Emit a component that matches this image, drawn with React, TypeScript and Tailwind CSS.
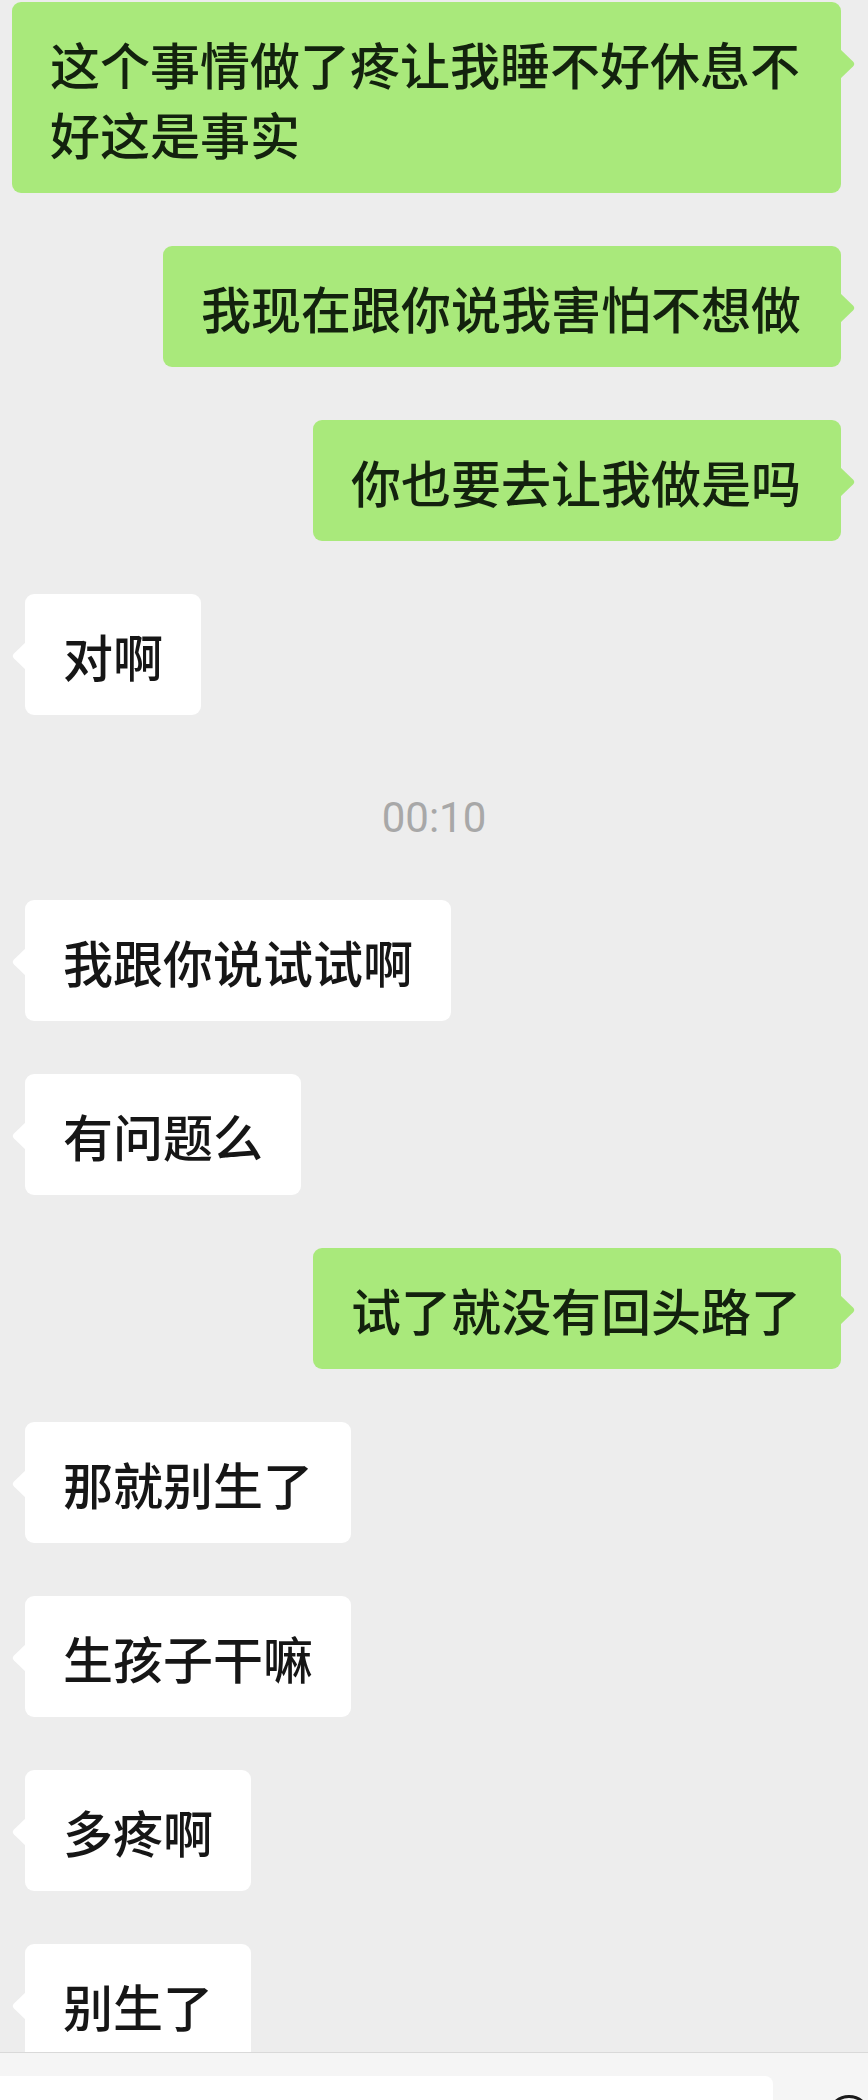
type Msg =
  | { kind: "me"; text: string }
  | { kind: "them"; text: string }
  | { kind: "time"; text: string };

const messages: Msg[] = [
  { kind: "me", text: "这个事情做了疼让我睡不好休息不好这是事实" },
  { kind: "me", text: "我现在跟你说我害怕不想做" },
  { kind: "me", text: "你也要去让我做是吗" },
  { kind: "them", text: "对啊" },
  { kind: "time", text: "00:10" },
  { kind: "them", text: "我跟你说试试啊" },
  { kind: "them", text: "有问题么" },
  { kind: "me", text: "试了就没有回头路了" },
  { kind: "them", text: "那就别生了" },
  { kind: "them", text: "生孩子干嘛" },
  { kind: "them", text: "多疼啊" },
  { kind: "them", text: "别生了" },
];

const cjk = "font-['Noto_Sans_CJK_SC','Noto_Sans',sans-serif] font-medium";

const MyBubble = ({ text }: { text: string }) => (
  <div className="flex justify-end pr-[27px]">
    <div
      className={`relative max-w-[829px] rounded-[9px] bg-[#a9e97b] pl-[38px] pr-[40px] py-[25.5px] text-[50px] leading-[70px] text-[#13220e] ${cjk}`}
    >
      {text}
      {/* tail */}
      <svg
        className="absolute right-[-15px] top-[47px]"
        width="16"
        height="30"
        viewBox="0 0 16 30"
      >
        <path d="M0 0 L13 12.5 Q15.5 15 13 17.5 L0 30 Z" fill="#a9e97b" />
      </svg>
    </div>
  </div>
);

const TheirBubble = ({ text }: { text: string }) => (
  <div className="flex justify-start pl-[25px]">
    <div
      className={`relative rounded-[9px] bg-white px-[38px] py-[25.5px] text-[50px] leading-[70px] text-[#161616] ${cjk}`}
    >
      {text}
      <svg
        className="absolute left-[-14px] top-[47px]"
        width="16"
        height="30"
        viewBox="0 0 16 30"
      >
        <path d="M16 0 L3 12.5 Q0.5 15 3 17.5 L16 30 Z" fill="#ffffff" />
      </svg>
    </div>
  </div>
);

export default function App() {
  return (
    <div className="w-[868px] h-[2100px] overflow-hidden bg-[#ededed] flex flex-col">
      {/* chat list */}
      <div className="h-[2052px] shrink-0 overflow-hidden pt-[2px] flex flex-col">
        {messages.map((m, i) => {
          if (m.kind === "time") {
            return (
              <div
                key={i}
                className="mt-[83px] mb-[62px] text-center text-[42px] leading-[40px] text-[#a8a8a8] font-['Roboto','Liberation_Sans',sans-serif]"
              >
                {m.text}
              </div>
            );
          }
          const prev = messages[i - 1];
          const spaced = i > 0 && prev.kind !== "time";
          return (
            <div key={i} className={spaced ? "mt-[53px]" : ""}>
              {m.kind === "me" ? (
                <MyBubble text={m.text} />
              ) : (
                <TheirBubble text={m.text} />
              )}
            </div>
          );
        })}
      </div>

      {/* input bar */}
      <div className="flex-1 min-h-0 overflow-hidden border-t border-[#d9d9d9] bg-[#f5f5f5] pt-[23px] flex items-start">
        <div className="w-[773px] h-[60px] shrink-0 rounded-tr-[8px] bg-white" />
        <div className="ml-[54px] mt-[19px] w-[44px] h-[44px] shrink-0 rounded-full border-[3px] border-[#1a1a1a]" />
      </div>
    </div>
  );
}
